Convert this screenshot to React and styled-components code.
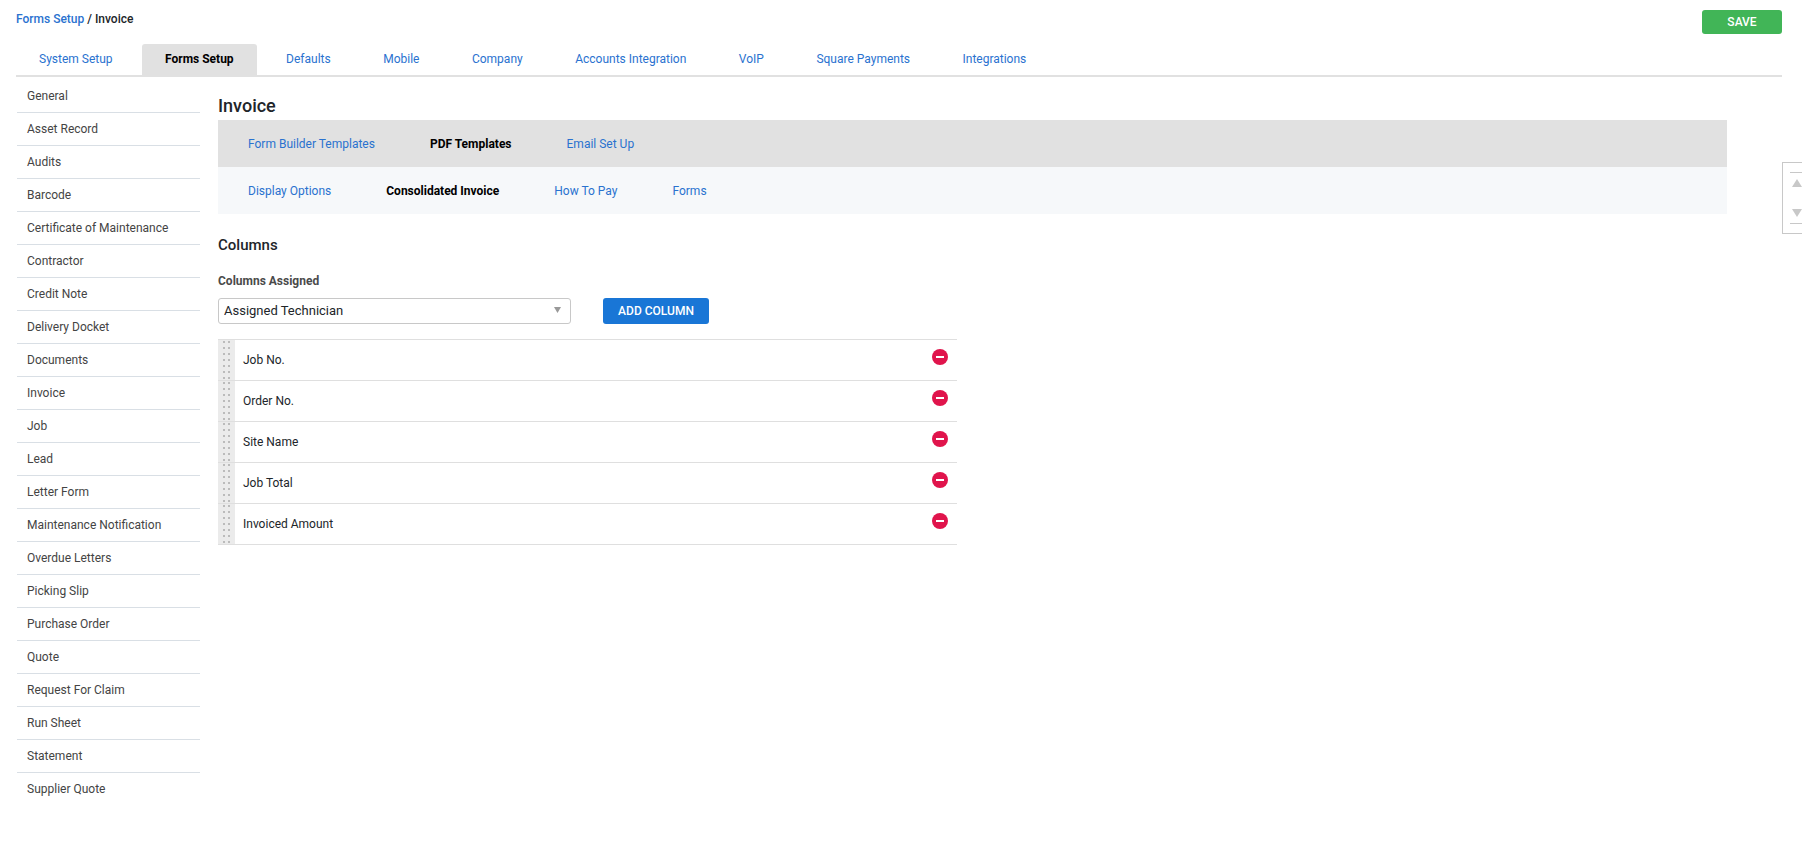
import React, { Fragment, useState } from 'react'
import styled, { createGlobalStyle } from 'styled-components'

const tabs = ['System Setup', 'Forms Setup', 'Defaults', 'Mobile', 'Company', 'Accounts Integration', 'VoIP', 'Square Payments', 'Integrations']

const menu = [
  'General', 'Asset Record', 'Audits', 'Barcode', 'Certificate of Maintenance', 'Contractor',
  'Credit Note', 'Delivery Docket', 'Documents', 'Invoice', 'Job', 'Lead', 'Letter Form',
  'Maintenance Notification', 'Overdue Letters', 'Picking Slip', 'Purchase Order', 'Quote',
  'Request For Claim', 'Run Sheet', 'Statement', 'Supplier Quote'
]

const templateTabs = ['Form Builder Templates', 'PDF Templates', 'Email Set Up']
const optionTabs = ['Display Options', 'Consolidated Invoice', 'How To Pay', 'Forms']

const RemoveIcon = () => (
  <svg width="16" height="16" viewBox="0 0 16 16" aria-hidden="true">
    <circle cx="8" cy="8" r="8" fill="#e0144c" />
    <rect x="4" y="7" width="8" height="2" fill="#fff" />
  </svg>
)

const App = () => {
  let [ columns, setColumns ] = useState(['Job No.', 'Order No.', 'Site Name', 'Job Total', 'Invoiced Amount'])
  let [ selected, setSelected ] = useState('Assigned Technician')

  function addColumn() {
    if (!columns.includes(selected)) {
      setColumns([...columns, selected])
    }
  }

  function removeColumn(name) {
    setColumns(columns.filter(column => column !== name))
  }

  return (
    <Page>
      <GlobalStyle />
      <Header>
        <Breadcrumb>
          <a href="#forms-setup">Forms Setup</a> / Invoice
        </Breadcrumb>
        <SaveButton type="button">SAVE</SaveButton>
      </Header>
      <Tabs>
        { tabs.map(tab => (
          <Fragment key={ tab }>
            <Tab href="#" $active={ tab === 'Forms Setup' }>{ tab }</Tab>{ ' ' }
          </Fragment>
        )) }
      </Tabs>
      <Body>
        <Sidebar>
          { menu.map(item => (
            <MenuItem key={ item } href="#">{ item }</MenuItem>
          )) }
        </Sidebar>
        <Main>
          <Title>Invoice</Title>
          <SubNav $background="#e1e1e1">
            { templateTabs.map(tab => (
              <SubTab key={ tab } href="#" $active={ tab === 'PDF Templates' }>{ tab }</SubTab>
            )) }
          </SubNav>
          <SubNav $background="#f6f8fa">
            { optionTabs.map(tab => (
              <SubTab key={ tab } href="#" $active={ tab === 'Consolidated Invoice' }>{ tab }</SubTab>
            )) }
          </SubNav>
          <SectionTitle>Columns</SectionTitle>
          <Label htmlFor="column">Columns Assigned</Label>
          <Controls>
            <Select id="column" value={ selected } onChange={ e => setSelected(e.target.value) }>
              <option>Assigned Technician</option>
            </Select>
            <AddButton type="button" onClick={ addColumn }>ADD COLUMN</AddButton>
          </Controls>
          <Table>
            <tbody>
              { columns.map(column => (
                <tr key={ column }>
                  <Handle />
                  <NameCell>{ column }</NameCell>
                  <ActionCell>
                    <RemoveButton type="button" aria-label={ `Remove ${column}` } onClick={ () => removeColumn(column) }>
                      <RemoveIcon />
                    </RemoveButton>
                  </ActionCell>
                </tr>
              )) }
            </tbody>
          </Table>
        </Main>
      </Body>
      <Scroller>
        <ScrollButton type="button" aria-label="Scroll to top" $edge="top">
          <svg width="10" height="8" viewBox="0 0 10 8"><path d="M5 0L10 8H0z" fill="#c8c8c8" /></svg>
        </ScrollButton>
        <ScrollButton type="button" aria-label="Scroll to bottom" $edge="bottom">
          <svg width="10" height="8" viewBox="0 0 10 8"><path d="M0 0H10L5 8z" fill="#c8c8c8" /></svg>
        </ScrollButton>
      </Scroller>
    </Page>
  )
}

export default App

const GlobalStyle = createGlobalStyle`
  * {
    box-sizing: border-box;
  }

  body {
    margin: 0;
    background: #fff;
    color: #212529;
    font-family: Roboto, "Liberation Sans", sans-serif;
    font-size: 12px;
    line-height: 16px;
  }

  a {
    color: #2a72cf;
    text-decoration: none;
  }

  button, select {
    font-family: inherit;
    cursor: pointer;
  }
`

const Page = styled.div`
  padding: 10px 20px 0 16px;
  overflow-x: hidden;
`

const Header = styled.header`
  display: flex;
  justify-content: space-between;
  height: 34px;
`

const Breadcrumb = styled.div`
  padding-top: 1px;
  font-weight: 500;
`

const BaseButton = styled.button`
  border: 0;
  border-radius: 3px;
  color: #fff;
  font-size: 12px;
  font-weight: 500;
  line-height: 16px;
`

const SaveButton = styled(BaseButton)`
  width: 80px;
  height: 24px;
  background: #41b557;
`

const Tabs = styled.nav`
  border-bottom: 2px solid #e1e1e1;
  font-size: 14px;
`

const Tab = styled.a`
  display: inline-block;
  margin-right: 3px;
  padding: 7px 23px 8px;
  border-radius: 3px 3px 0 0;
  background: ${ props => props.$active ? '#e1e1e1' : 'transparent' };
  color: ${ props => props.$active ? '#000' : '#2a72cf' };
  font-size: 12px;
  font-weight: ${ props => props.$active ? 700 : 400 };
  vertical-align: top;
`

const Body = styled.div`
  display: flex;
  gap: 18px;
`

const Sidebar = styled.nav`
  width: 184px;
  flex: none;
  padding: 3px 0 0 1px;
`

const MenuItem = styled.a`
  display: block;
  padding: 8px 10px;
  color: #444;

  &:not(:last-child) {
    border-bottom: 1px solid #d9dfe5;
  }
`

const Main = styled.main`
  flex: 1;
  min-width: 0;
  padding: 17px 55px 0 0;
`

const Title = styled.h1`
  margin: 0 0 2px;
  font-size: 18px;
  font-weight: 500;
  line-height: 24px;
`

const SubNav = styled.nav`
  display: flex;
  align-items: center;
  gap: 55px;
  height: 47px;
  padding: 0 30px;
  background: ${ props => props.$background };
`

const SubTab = styled.a`
  color: ${ props => props.$active ? '#000' : '#2a72cf' };
  font-weight: ${ props => props.$active ? 700 : 400 };
`

const SectionTitle = styled.h2`
  margin: 19px 0 16px;
  font-size: 15px;
  font-weight: 500;
  line-height: 24px;
`

const Label = styled.label`
  display: block;
  margin-bottom: 9px;
  color: #4a4a4a;
  font-weight: 700;
`

const Controls = styled.div`
  display: flex;
  gap: 32px;
  margin-bottom: 15px;
`

const Select = styled.select`
  width: 353px;
  height: 26px;
  padding: 0 24px 2px 5px;
  appearance: none;
  border: 1px solid #c8c8c8;
  border-radius: 3px;
  background: url("data:image/svg+xml,%3Csvg xmlns='http://www.w3.org/2000/svg' width='7' height='6'%3E%3Cpath d='M0 0h7L3.5 6z' fill='%23999'/%3E%3C/svg%3E") no-repeat right 9px top 8px #fff;
  color: #212529;
  font-size: 13px;
`

const AddButton = styled(BaseButton)`
  width: 106px;
  height: 26px;
  background: #1976d6;
`

const Table = styled.table`
  width: 739px;
  max-width: 100%;
  border-collapse: separate;
  border-spacing: 0;
  border-top: 1px solid #dfdfdf;

  td {
    height: 41px;
    padding: 0;
    border-bottom: 1px solid #dfdfdf;
  }
`

/* two columns of grip dots */
const Handle = styled.td`
  width: 17px;
  background:
    linear-gradient(#bbb 2px, transparent 2px) 5px 1px / 2px 6px repeat-y,
    linear-gradient(#bbb 2px, transparent 2px) 10px 1px / 2px 6px repeat-y,
    #ebebeb;
  cursor: move;
`

const NameCell = styled.td`
  && {
    padding-left: 8px;
  }
`

const ActionCell = styled.td`
  width: 25px;
  vertical-align: top;
`

const RemoveButton = styled.button`
  display: block;
  margin-top: 9px;
  padding: 0;
  border: 0;
  background: none;

  svg {
    display: block;
  }
`

/* sticks out past the right edge of the window */
const Scroller = styled.div`
  position: fixed;
  top: 162px;
  right: 0;
  display: flex;
  flex-direction: column;
  justify-content: space-between;
  width: 20px;
  height: 72px;
  padding: 9px 0 9px 7px;
  border: 1px solid #c8c8c8;
  border-right: 0;
  overflow: hidden;
`

const ScrollButton = styled.button`
  width: 16px;
  padding: 6px 2px;
  border: 0 solid #c8c8c8;
  border-${ props => props.$edge }-width: 1px;
  background: none;

  svg {
    display: block;
  }
`
